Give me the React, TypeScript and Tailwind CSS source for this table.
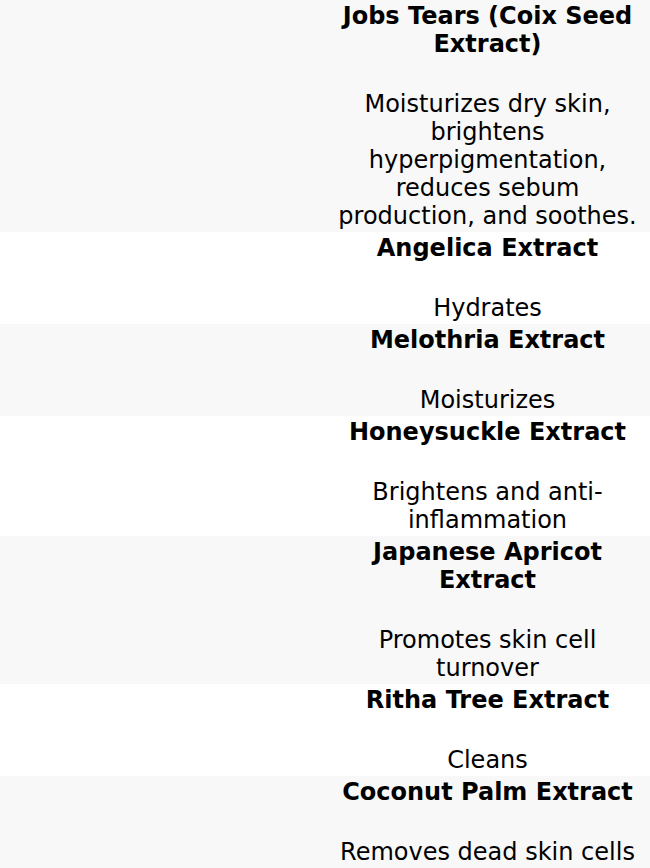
const ROWS = [
  {
    name: "Jobs Tears (Coix Seed Extract)",
    desc: "Moisturizes dry skin, brightens hyperpigmentation, reduces sebum production, and soothes.",
  },
  { name: "Angelica Extract", desc: "Hydrates" },
  { name: "Melothria Extract", desc: "Moisturizes" },
  { name: "Honeysuckle Extract", desc: "Brightens and anti-inflammation" },
  { name: "Japanese Apricot Extract", desc: "Promotes skin cell turnover" },
  { name: "Ritha Tree Extract", desc: "Cleans" },
  { name: "Coconut Palm Extract", desc: "Removes dead skin cells" },
];

const App = () => {
  return (
    <div
      className="w-[650px] text-black text-[24px] leading-[28px]"
      style={{ fontFamily: '"DejaVu Sans", sans-serif' }}
    >
      {ROWS.map((r, i) => (
        <div
          key={r.name}
          className={`grid grid-cols-2 ${i % 2 === 0 ? "bg-[#f8f8f8]" : "bg-white"}`}
        >
          <div></div>
          <div className="flex flex-col gap-8 px-2 py-[2px] text-center">
            <div className="font-bold">{r.name}</div>
            <div>{r.desc}</div>
          </div>
        </div>
      ))}
    </div>
  );
};

export default App;
